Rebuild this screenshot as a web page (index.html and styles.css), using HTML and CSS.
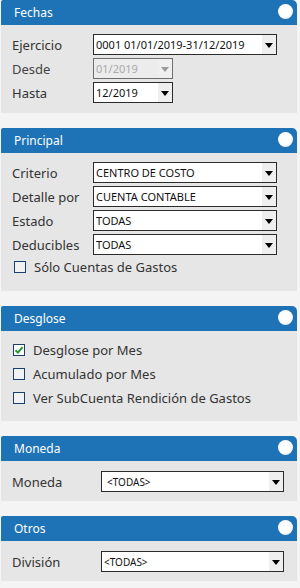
FILE: index.html
```html
<!DOCTYPE html>
<html lang="es">
<head>
    <meta charset="UTF-8">
    <meta name="viewport" content="width=device-width, initial-scale=1.0">
    <title>Filtros</title>
    <link rel="stylesheet" href="styles.css">
</head>
<body>
    <div class="panel">
        <div class="panel-header"><span>Fechas</span><i class="knob"></i></div>
        <div class="panel-body">
            <div class="row">
                <label>Ejercicio</label>
                <div class="select wide"><span>0001 01/01/2019-31/12/2019</span><b class="arrow"></b></div>
            </div>
            <div class="row">
                <label class="muted">Desde</label>
                <div class="select short disabled"><span>01/2019</span><b class="arrow"></b></div>
            </div>
            <div class="row">
                <label>Hasta</label>
                <div class="select short"><span>12/2019</span><b class="arrow"></b></div>
            </div>
        </div>
    </div>

    <div class="panel">
        <div class="panel-header"><span>Principal</span><i class="knob"></i></div>
        <div class="panel-body">
            <div class="row">
                <label>Criterio</label>
                <div class="select wide"><span>CENTRO DE COSTO</span><b class="arrow"></b></div>
            </div>
            <div class="row">
                <label>Detalle por</label>
                <div class="select wide"><span>CUENTA CONTABLE</span><b class="arrow"></b></div>
            </div>
            <div class="row">
                <label>Estado</label>
                <div class="select wide"><span>TODAS</span><b class="arrow"></b></div>
            </div>
            <div class="row">
                <label>Deducibles</label>
                <div class="select wide"><span>TODAS</span><b class="arrow"></b></div>
            </div>
            <div class="check first"><i class="box"></i>Sólo Cuentas de Gastos</div>
        </div>
    </div>

    <div class="panel">
        <div class="panel-header"><span>Desglose</span><i class="knob"></i></div>
        <div class="panel-body checks">
            <div class="check"><i class="box checked"><svg width="10" height="10" viewBox="0 0 10 10"><path d="M1.5 5.2 L4 7.6 L8.6 2.2" fill="none" stroke="#1e9a2c" stroke-width="2"/></svg></i>Desglose por Mes</div>
            <div class="check"><i class="box"></i>Acumulado por Mes</div>
            <div class="check"><i class="box"></i>Ver SubCuenta Rendición de Gastos</div>
        </div>
    </div>

    <div class="panel">
        <div class="panel-header"><span>Moneda</span><i class="knob"></i></div>
        <div class="panel-body single">
            <div class="row">
                <label>Moneda</label>
                <div class="select side"><span class="small">&lt;TODAS&gt;</span><b class="arrow"></b></div>
            </div>
        </div>
    </div>

    <div class="panel last">
        <div class="panel-header"><span>Otros</span><i class="knob"></i></div>
        <div class="panel-body single">
            <div class="row">
                <label>División</label>
                <div class="select side"><span class="small tight">&lt;TODAS&gt;</span><b class="arrow"></b></div>
            </div>
        </div>
    </div>
</body>
</html>
```

FILE: styles.css
```css
body {
    margin: 0;
    padding: 0 3px 0 1px;
    background-color: #f4f4f4;
    font-family: "Noto Sans", Arial, sans-serif;
    color: #333;
}

.panel {
    margin-bottom: 15px;
}

.panel.last {
    margin-bottom: 0;
}

.panel-header {
    height: 25px;
    background-color: #1e73b6;
    border-radius: 2px 5px 0 0;
    display: flex;
    align-items: center;
    justify-content: space-between;
    padding: 0 4px 0 13px;
    color: #fff;
    font-size: 12px;
}

.panel-header span {
    margin-top: -1px;
}

.knob {
    width: 15px;
    height: 15px;
    border-radius: 50%;
    background: radial-gradient(circle at 40% 38%, #fff 55%, #e8ecf2 75%, #9fb3cc 100%);
    margin-top: -3px;
}

.panel-body {
    background-color: #e6e6e6;
    padding: 9px 0 10px 11px;
    display: flex;
    flex-direction: column;
    gap: 3px;
}

.panel-body.checks {
    padding: 13px 0 17px 12px;
    gap: 12px;
}

.panel-body.single {
    padding: 10px 0 9px 11px;
}

.row {
    display: flex;
    align-items: center;
    height: 21px;
}

.row label {
    width: 81px;
    font-size: 13px;
}

.row label.muted {
    color: #444;
}

.panel-body.single .row label {
    width: 89px;
}

.select {
    box-sizing: border-box;
    height: 21px;
    border: 1px solid #2b2b2b;
    background-color: #fff;
    display: flex;
    align-items: center;
    justify-content: space-between;
    font-size: 11px;
    color: #111;
}

.select span {
    padding-left: 2px;
    white-space: nowrap;
}

.select span.small {
    font-size: 10px;
    padding-left: 5px;
}

.select span.small.tight {
    padding-left: 2px;
}

.select.wide {
    width: 184px;
}

.select.short {
    width: 80px;
}

.select.side {
    width: 183px;
}

.select.disabled {
    background-color: #ececec;
    border-color: #6e6e6e;
    color: #a9a9a9;
}

.arrow {
    width: 14px;
    height: 19px;
    background-color: #efefef;
    display: flex;
    align-items: center;
    justify-content: center;
}

.arrow::after {
    content: "";
    border-left: 4px solid transparent;
    border-right: 4px solid transparent;
    border-top: 5px solid #000;
    margin-top: 1px;
}

.select.disabled .arrow::after {
    border-top-color: #9a9a9a;
}

.check {
    display: flex;
    align-items: center;
    font-size: 13px;
    height: 12px;
    gap: 8px;
}

.check.first {
    margin-top: 3px;
    margin-left: 2px;
    margin-bottom: 8px;
}

.box {
    box-sizing: border-box;
    width: 12px;
    height: 12px;
    border: 1px solid #1d3f6e;
    background-color: #f2f2f2;
    display: flex;
    align-items: center;
    justify-content: center;
}

.box.checked {
    background-color: #fff;
}
```
